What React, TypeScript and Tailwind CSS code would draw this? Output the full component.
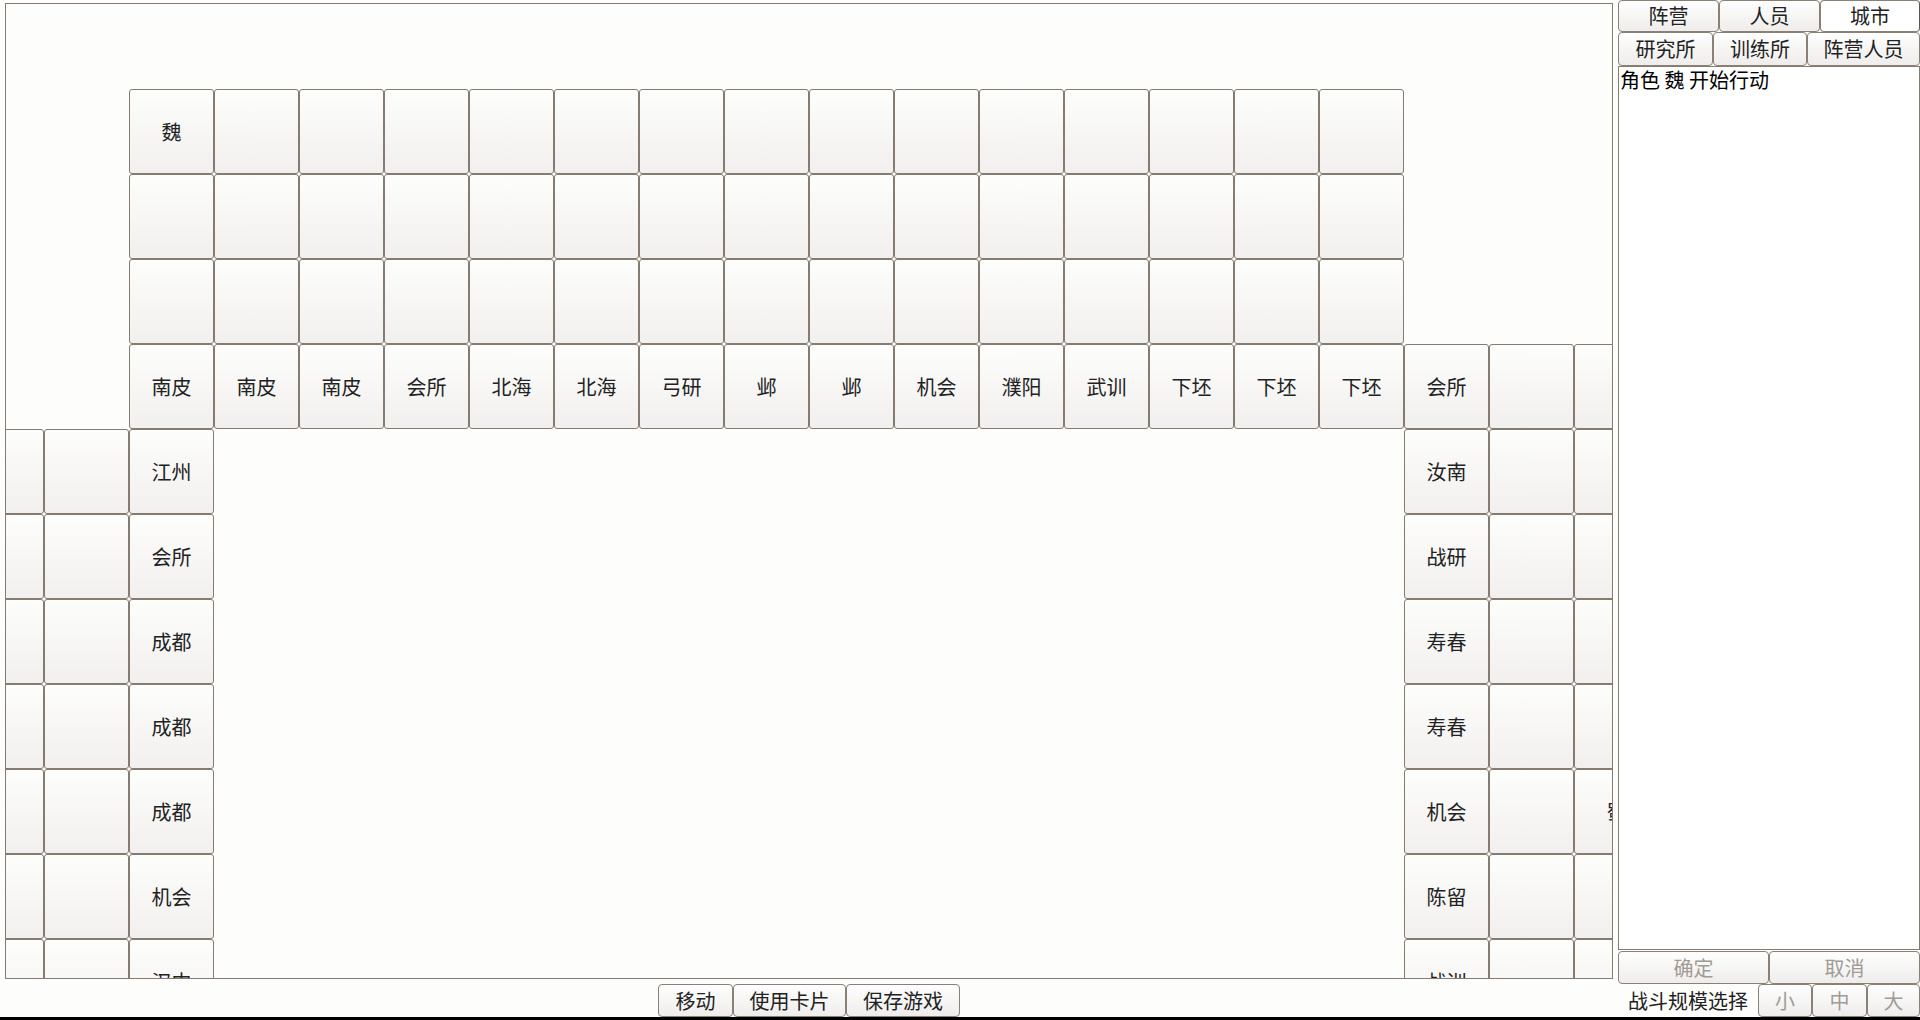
import React from 'react'

const FONT = { fontFamily: '"Noto Sans CJK SC", "Noto Sans", sans-serif' }

// null = no tile, '' = blank tile, text = labelled tile
type Slot = string | null

const blank = (n: number): Slot[] => Array.from({ length: n }, () => '')
const none = (n: number): Slot[] => Array.from({ length: n }, () => null)

const leftSide = ['江州', '会所', '成都', '成都', '成都', '机会', '汉中']
const rightSide = ['汝南', '战研', '寿春', '寿春', '机会', '陈留', '战训']

const board: Slot[][] = [
  [...none(2), '魏', ...blank(14), ...none(3)],
  [...none(2), ...blank(15), ...none(3)],
  [...none(2), ...blank(15), ...none(3)],
  [
    ...none(2),
    '南皮', '南皮', '南皮', '会所', '北海', '北海', '弓研', '邺', '邺', '机会', '濮阳', '武训', '下坯', '下坯', '下坯',
    '会所', '', '',
  ],
  ...leftSide.map((l, i) => [
    '', '', l, ...none(14), rightSide[i], '', i === 4 ? '蜀' : '',
  ] as Slot[]),
]

function Tile({ label }: { label: Slot }) {
  if (label === null) return <div className="w-[85px] h-[85px] shrink-0" />
  return (
    <div className="w-[85px] h-[85px] shrink-0 flex items-center justify-center rounded-[3px] border border-[#857b70] bg-linear-to-b from-[#fdfdfc] to-[#f1f0ee] text-[20px] text-[#222]">
      {label}
    </div>
  )
}

function Btn({
  children,
  className = '',
  disabled = false,
}: {
  children: React.ReactNode
  className?: string
  disabled?: boolean
}) {
  return (
    <button
      className={`h-full flex items-center justify-center rounded-[4px] border border-[#8a8075] bg-linear-to-b from-[#fefefe] to-[#eeedeb] text-[20px] leading-none ${
        disabled ? 'text-[#a19b95]' : 'text-[#222]'
      } ${className}`}
    >
      {children}
    </button>
  )
}

export default function App() {
  return (
    <div className="w-[1920px] h-[1020px] bg-black overflow-hidden" style={FONT}>
      <div className="h-[1017px] flex bg-[#fdfdfc]">
        {/* board + actions */}
        <div className="w-[1618px] shrink-0 flex flex-col px-[5px] pt-[3px]">
          <div className="h-[976px] border border-[#857b70] overflow-hidden bg-[#fdfdfc]">
            <div className="pt-[85px] ml-[-47px] flex flex-col">
              {board.map((row, r) => (
                <div key={r} className="flex">
                  {row.map((s, c) => (
                    <Tile key={c} label={s} />
                  ))}
                </div>
              ))}
            </div>
          </div>
          <div className="mt-[5px] h-[33px] flex justify-center">
            <Btn className="w-[75px]">移动</Btn>
            <Btn className="w-[113px]">使用卡片</Btn>
            <Btn className="w-[114px]">保存游戏</Btn>
          </div>
        </div>

        {/* side panel */}
        <div className="w-[302px] shrink-0 flex flex-col">
          <div className="h-[32px] flex">
            <Btn className="w-[101px]">阵营</Btn>
            <Btn className="w-[101px]">人员</Btn>
            <button className="w-[100px] h-full flex items-center justify-center rounded-[4px] border border-[#8a8075] border-r-[#555] border-r-dashed bg-white text-[20px] text-[#222] leading-none">
              城市
            </button>
          </div>
          <div className="h-[34px] flex">
            <Btn className="w-[95px]">研究所</Btn>
            <Btn className="w-[94px]">训练所</Btn>
            <Btn className="flex-1">阵营人员</Btn>
          </div>
          <div className="h-[884px] border border-[#857b70] bg-white px-[1px] text-[20px] leading-[26px] text-black">
            角色 魏 开始行动
          </div>
          <div className="mt-[1px] h-[33px] flex">
            <Btn className="flex-1" disabled>确定</Btn>
            <Btn className="flex-1" disabled>取消</Btn>
          </div>
          <div className="h-[33px] flex">
            <div className="flex-1 flex items-center justify-center text-[20px] text-[#222]">战斗规模选择</div>
            <Btn className="w-[54px]" disabled>小</Btn>
            <Btn className="w-[55px]" disabled>中</Btn>
            <Btn className="w-[53px]" disabled>大</Btn>
          </div>
        </div>
      </div>
    </div>
  )
}
